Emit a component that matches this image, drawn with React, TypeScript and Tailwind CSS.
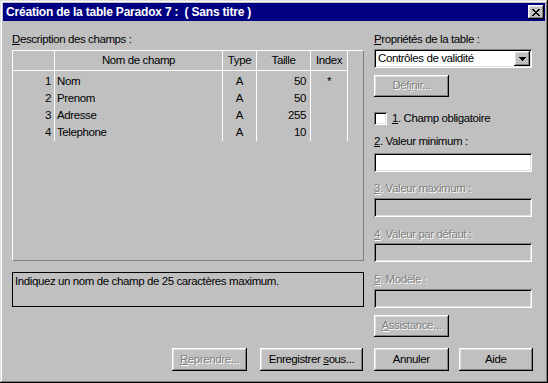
import React from 'react';

const raised =
  'shadow-[inset_-1px_-1px_#000,inset_1px_1px_#fff,inset_-2px_-2px_#808080,inset_2px_2px_#dfdfdf]';
const sunken =
  'shadow-[inset_1px_1px_#808080,inset_-1px_-1px_#fff,inset_2px_2px_#000,inset_-2px_-2px_#dfdfdf]';
const greyed = 'text-[#808080] [text-shadow:1px_1px_0_#fff]';

type Col = { title: string; width: string; align: string; values: string[] };

const columns: Col[] = [
  { title: '', width: 'w-[42px]', align: 'text-right pr-[3px]', values: ['1', '2', '3', '4'] },
  { title: 'Nom de champ', width: 'w-[168px]', align: 'text-left pl-[2px]', values: ['Nom', 'Prenom', 'Adresse', 'Telephone'] },
  { title: 'Type', width: 'w-[34px]', align: 'text-center', values: ['A', 'A', 'A', 'A'] },
  { title: 'Taille', width: 'w-[54px]', align: 'text-right pr-[4px]', values: ['50', '50', '255', '10'] },
  { title: 'Index', width: 'w-[37px]', align: 'text-center', values: ['*', '', '', ''] },
];

function Button({
  children,
  width,
  disabled,
  className = '',
}: {
  children: React.ReactNode;
  width: string;
  disabled?: boolean;
  className?: string;
}) {
  return (
    <div
      className={`${width} h-[23px] flex items-center justify-center bg-[#c0c0c0] ${raised} ${
        disabled ? greyed : 'text-black'
      } ${className}`}
    >
      {children}
    </div>
  );
}

function Field({ disabled }: { disabled?: boolean }) {
  return <div className={`w-[158px] h-[19px] ${disabled ? 'bg-[#c0c0c0]' : 'bg-white'} ${sunken}`} />;
}

function FieldLabel({ n, text, disabled }: { n: string; text: string; disabled?: boolean }) {
  return (
    <div className={`h-[13px] leading-[13px] ${disabled ? greyed : ''}`}>
      <u className="underline-offset-1">{n}</u>. {text}
    </div>
  );
}

function CloseGlyph() {
  const px = [
    [0, 0], [1, 0], [6, 0], [7, 0],
    [1, 1], [2, 1], [5, 1], [6, 1],
    [2, 2], [3, 2], [4, 2], [5, 2],
    [3, 3], [4, 3],
    [2, 4], [3, 4], [4, 4], [5, 4],
    [1, 5], [2, 5], [5, 5], [6, 5],
    [0, 6], [1, 6], [6, 6], [7, 6],
  ];
  return (
    <svg width="8" height="7" viewBox="0 0 8 7" shapeRendering="crispEdges">
      {px.map(([x, y]) => (
        <rect key={`${x}-${y}`} x={x} y={y} width="1" height="1" fill="#000" />
      ))}
    </svg>
  );
}

function ArrowGlyph() {
  return (
    <svg width="7" height="4" viewBox="0 0 7 4" shapeRendering="crispEdges">
      <rect x="0" y="0" width="7" height="1" fill="#000" />
      <rect x="1" y="1" width="5" height="1" fill="#000" />
      <rect x="2" y="2" width="3" height="1" fill="#000" />
      <rect x="3" y="3" width="1" height="1" fill="#000" />
    </svg>
  );
}

export default function App() {
  return (
    <div
      className="w-[548px] h-[383px] bg-[#c0c0c0] p-[3px] flex flex-col text-[11.5px] tracking-[-0.4px] text-black shadow-[inset_-1px_-1px_#000,inset_1px_1px_#dfdfdf,inset_-2px_-2px_#808080,inset_2px_2px_#fff]"
      style={{ fontFamily: '"Liberation Sans", Arial, sans-serif' }}
    >
      {/* Title bar */}
      <div className="h-[18px] bg-[#000080] flex items-center justify-between pl-[3px] pr-[1px]">
        <span className="text-white font-bold text-[12px] tracking-[-0.2px] whitespace-pre">
          Création de la table Paradox 7 :  ( Sans titre )
        </span>
        <div className={`w-[16px] h-[14px] bg-[#c0c0c0] flex items-center justify-center ${raised}`}>
          <CloseGlyph />
        </div>
      </div>

      {/* Body */}
      <div className="flex flex-row pl-[9px] gap-[10px]">
        {/* Left side */}
        <div className="w-[352px] flex flex-col">
          <div className="mt-[12px] h-[13px] leading-[13px]">
            <u className="underline-offset-1">D</u>escription des champs :
          </div>
          <div className="mt-[4px] h-[211px] border-t border-l border-white border-r border-b border-r-[#808080] border-b-[#808080] flex flex-row">
            {columns.map((c) => (
              <div key={c.title || 'num'} className={`${c.width} h-[90px] border-r border-white flex flex-col`}>
                <div className="h-[20px] border-b border-white flex items-center justify-center">{c.title}</div>
                <div className="pt-[2px] flex flex-col">
                  {c.values.map((v, i) => (
                    <div key={i} className={`h-[17px] leading-[17px] ${c.align}`}>
                      {v}
                    </div>
                  ))}
                </div>
              </div>
            ))}
          </div>
          <div className="mt-[11px] h-[35px] border border-black px-[2px] pt-[2px] leading-[13px]">
            Indiquez un nom de champ de 25 caractères maximum.
          </div>
          <div className="mt-[41px] flex flex-row justify-end gap-[13px] pr-[1px]">
            <Button width="w-[75px]" disabled>
              <span>
                <u className="underline-offset-1">R</u>eprendre...
              </span>
            </Button>
            <Button width="w-[103px]">
              <span>
                Enregistrer <u className="underline-offset-1">s</u>ous...
              </span>
            </Button>
          </div>
        </div>

        {/* Right side */}
        <div className="w-[159px] flex flex-col">
          <div className="mt-[12px] h-[13px] leading-[13px]">
            <u className="underline-offset-1">P</u>ropriétés de la table :
          </div>
          <div className={`mt-[3px] w-[158px] h-[19px] bg-white flex flex-row items-center justify-between pl-[4px] pr-[2px] ${sunken}`}>
            <span>Contrôles de validité</span>
            <div className={`w-[16px] h-[15px] bg-[#c0c0c0] flex items-center justify-center ${raised}`}>
              <ArrowGlyph />
            </div>
          </div>
          <Button width="w-[75px]" disabled className="mt-[7px] !h-[22px]">
            <span>
              Déf<u className="underline-offset-1">i</u>nir...
            </span>
          </Button>
          <div className="mt-[15px] flex flex-row items-center gap-[5px]">
            <div className={`w-[13px] h-[13px] bg-white ${sunken}`} />
            <span className="leading-[13px]">
              <u className="underline-offset-1">1</u>. Champ obligatoire
            </span>
          </div>
          <div className="mt-[10px]">
            <FieldLabel n="2" text="Valeur minimum :" />
          </div>
          <div className="mt-[5px]">
            <Field />
          </div>
          <div className="mt-[10px]">
            <FieldLabel n="3" text="Valeur maximum :" disabled />
          </div>
          <div className="mt-[3px]">
            <Field disabled />
          </div>
          <div className="mt-[11px]">
            <FieldLabel n="4" text="Valeur par défaut :" disabled />
          </div>
          <div className="mt-[2px]">
            <Field disabled />
          </div>
          <div className="mt-[11px]">
            <FieldLabel n="5" text="Modèle :" disabled />
          </div>
          <div className="mt-[3px]">
            <Field disabled />
          </div>
          <Button width="w-[75px]" disabled className="mt-[7px] !h-[22px]">
            <span>
              <u className="underline-offset-1">A</u>ssistance...
            </span>
          </Button>
          <div className="mt-[11px] flex flex-row gap-[10px]">
            <Button width="w-[75px]">Annuler</Button>
            <Button width="w-[75px]">Aide</Button>
          </div>
        </div>
      </div>
    </div>
  );
}
